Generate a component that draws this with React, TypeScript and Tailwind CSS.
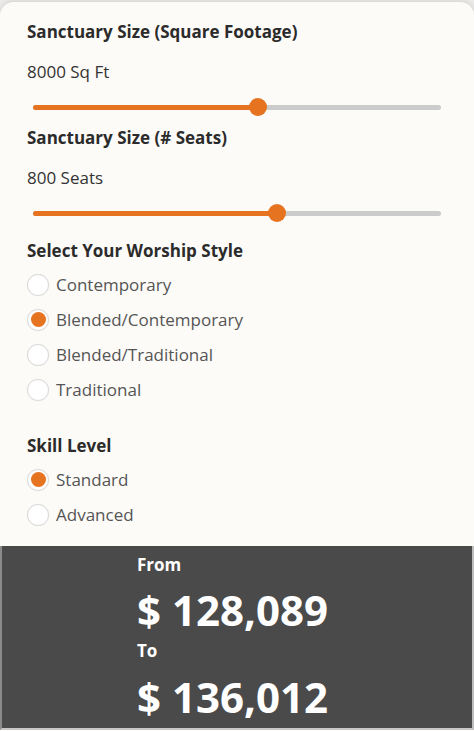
import React from "react";

const font = { fontFamily: '"Open Sans", "Noto Sans", Arial, sans-serif' };

function Slider({ fill }: { fill: number }) {
  return (
    <div className="relative ml-[6px] h-[20px] w-[408px]">
      <div className="absolute left-0 right-0 top-[7.5px] h-[5px] rounded-full bg-[#cbcbcb]" />
      <div
        className="absolute left-0 top-[7.5px] h-[5px] rounded-full bg-[#e6731f]"
        style={{ width: fill }}
      />
      <div
        className="absolute top-[1px] h-[18px] w-[18px] rounded-full bg-[#e6731f]"
        style={{ left: fill - 9 }}
      />
    </div>
  );
}

function Radio({ label, checked }: { label: string; checked?: boolean }) {
  return (
    <div className="flex h-[35px] items-center">
      <div className="flex h-[22px] w-[22px] items-center justify-center rounded-full border border-[#dcdcdc] bg-white shadow-[0_0_1px_rgba(0,0,0,0.1)]">
        {checked && <div className="h-[15px] w-[15px] rounded-full bg-[#e6731f]" />}
      </div>
      <span className="ml-[7px] text-[17px] leading-[24px] text-[#555555]">{label}</span>
    </div>
  );
}

export default function App() {
  return (
    <div className="h-[731px] w-[474px] overflow-hidden bg-[#eeecea] pt-[2px]" style={font}>
      <div className="h-[729px] rounded-t-[14px] bg-[#fdfbf8] shadow-[0_-1px_6px_rgba(0,0,0,0.12)]">
        <div className="px-[27px] pt-[18px]">
          <div className="h-[24px] text-[17px] font-bold leading-[24px] text-[#2b2b2b]">
            Sanctuary Size (Square Footage)
          </div>
          <div className="mt-[16px] h-[24px] text-[17px] leading-[24px] text-[#333333]">8000 Sq Ft</div>
          <div className="mt-[13px]">
            <Slider fill={225} />
          </div>
          <div className="mt-[9px] h-[24px] text-[17px] font-bold leading-[24px] text-[#2b2b2b]">
            Sanctuary Size (# Seats)
          </div>
          <div className="mt-[16px] h-[24px] text-[17px] leading-[24px] text-[#333333]">800 Seats</div>
          <div className="mt-[13px]">
            <Slider fill={244} />
          </div>
          <div className="mt-[16px] h-[24px] text-[17px] font-bold leading-[24px] text-[#2b2b2b]">
            Select Your Worship Style
          </div>
          <div className="mt-[4px] flex flex-col">
            <Radio label="Contemporary" />
            <Radio label="Blended/Contemporary" checked />
            <Radio label="Blended/Traditional" />
            <Radio label="Traditional" />
          </div>
          <div className="mt-[27px] h-[24px] text-[17px] font-bold leading-[24px] text-[#2b2b2b]">
            Skill Level
          </div>
          <div className="mt-[4px] flex flex-col">
            <Radio label="Standard" checked />
            <Radio label="Advanced" />
          </div>
        </div>
        <div className="mt-[14px] h-[184px] border-b-2 border-l-2 border-r-2 border-b-[#c8c8c8] border-l-[#8a8a8a] border-r-[#bdbdbd] bg-[#4a4a4a] pb-[8px] pl-[135px] pt-[9px] text-white">
          <div className="h-[20px] text-[17px] font-bold leading-[20px]">From</div>
          <div className="mt-[12px] h-[46px] text-[42px] font-bold leading-[46px]">$ 128,089</div>
          <div className="mt-[8px] h-[20px] text-[17px] font-bold leading-[20px]">To</div>
          <div className="mt-[13px] h-[46px] text-[42px] font-bold leading-[46px]">$ 136,012</div>
        </div>
      </div>
    </div>
  );
}
